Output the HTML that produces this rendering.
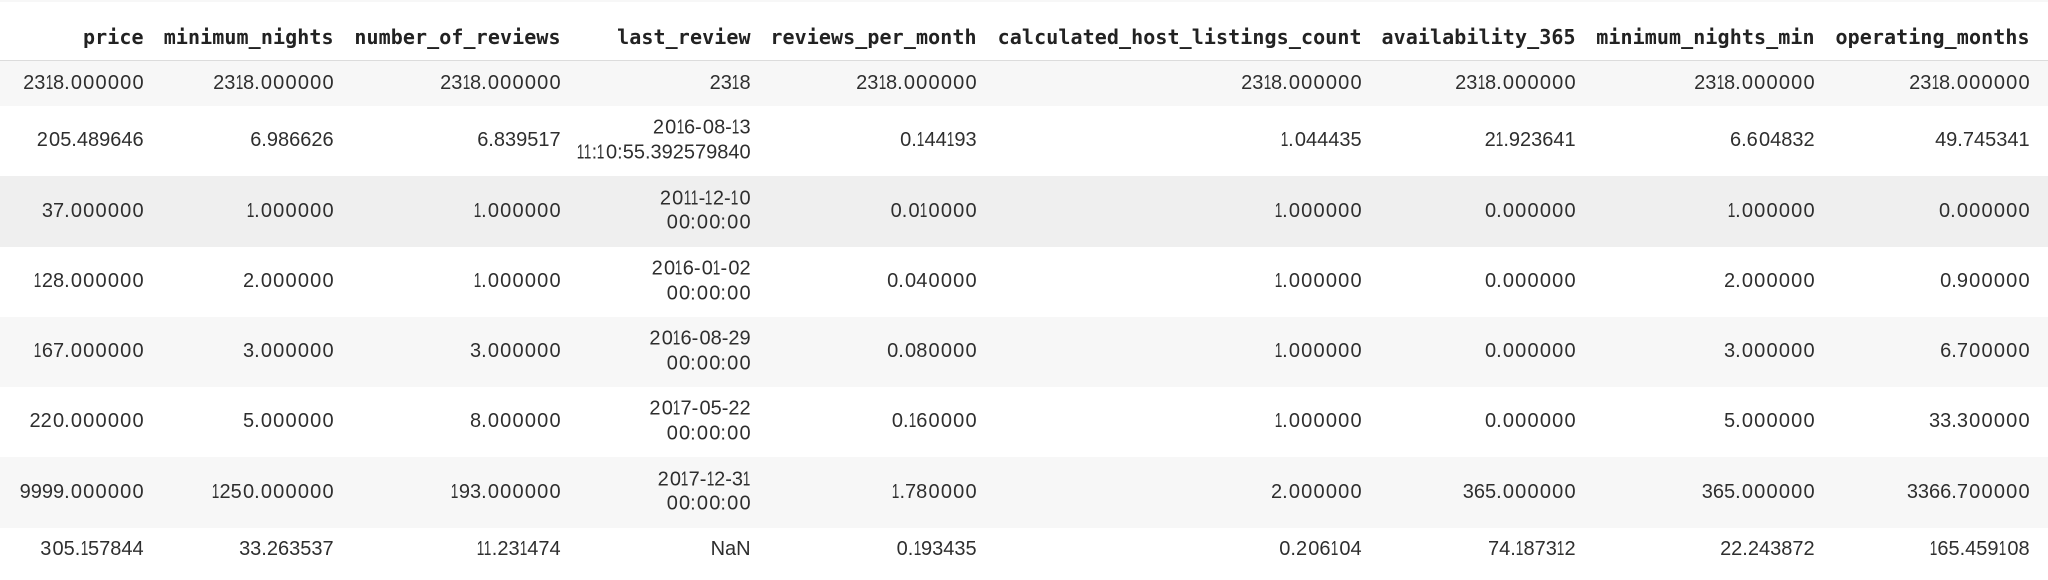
<!DOCTYPE html>
<html><head><meta charset="utf-8">
<style>
html,body{margin:0;padding:0;background:#fff}
#p{position:relative;width:2048px;height:580px;overflow:hidden;background:#fff;font-family:"Liberation Sans",sans-serif;font-size:20px;line-height:24.9px;color:#2e2e2e;filter:blur(.3px)}
.r{position:absolute;left:0;width:2048px}
.r>span{position:absolute;top:50%;transform:translateY(calc(-50% - .5px));text-align:right;white-space:nowrap}
.r>span:nth-child(4){transform:translateY(calc(-50% - .4px))}
i{font-style:normal;display:inline-block;transform:scaleX(.68);margin:0 -1.75px}
u{text-decoration:none;letter-spacing:1.2px;margin-left:1.2px;margin-right:-1.2px}
.h{font-family:"DejaVu Sans Mono","Liberation Mono",monospace;font-weight:bold;font-size:20px;letter-spacing:.09px;color:#222}
.r>span:nth-child(1){right:1904.4px}
.r>span:nth-child(2){right:1714.4px}
.r>span:nth-child(3){right:1487.4px}
.r>span:nth-child(4){right:1297.4px}
.r>span:nth-child(5){right:1071.4px}
.r>span:nth-child(6){right:686.4px}
.r>span:nth-child(7){right:472.4px}
.r>span:nth-child(8){right:233.4px}
.r>span:nth-child(9){right:18.4px}
</style></head><body>
<div id="p">
<div style="position:absolute;left:0;top:0;width:2048px;height:2px;background:#f7f7f7"></div>
<div style="position:absolute;left:0;top:60px;width:2048px;height:1px;background:#dcdcdc"></div>

<div class="r h" style="top:17px;height:41px"><span>price</span><span>minimum_nights</span><span>number_of_reviews</span><span>last_review</span><span>reviews_per_month</span><span>calculated_host_listings_count</span><span>availability_365</span><span>minimum_nights_min</span><span>operating_months</span></div>

<div class="r" style="top:61px;height:45px;background:#f7f7f7"><span>23<i>1</i>8.<u>000000</u></span><span>23<i>1</i>8.<u>000000</u></span><span>23<i>1</i>8.<u>000000</u></span><span>23<i>1</i>8</span><span>23<i>1</i>8.<u>000000</u></span><span>23<i>1</i>8.<u>000000</u></span><span>23<i>1</i>8.<u>000000</u></span><span>23<i>1</i>8.<u>000000</u></span><span>23<i>1</i>8.<u>000000</u></span></div>

<div class="r" style="top:106px;height:70px"><span>2<u>0</u>5.489646</span><span>6.986626</span><span>6.839517</span><span>2<u>0</u><i>1</i>6-<u>0</u>8-<i>1</i>3<br><i>1</i><i>1</i>:<i>1</i><u>0</u>:55.392579840</span><span><u>0</u>.<i>1</i>44<i>1</i>93</span><span><i>1</i>.<u>0</u>44435</span><span>2<i>1</i>.923641</span><span>6.6<u>0</u>4832</span><span>49.745341</span></div>

<div class="r" style="top:176px;height:71px;background:#efefef"><span>37.<u>000000</u></span><span><i>1</i>.<u>000000</u></span><span><i>1</i>.<u>000000</u></span><span>2<u>0</u><i>1</i><i>1</i>-<i>1</i>2-<i>1</i><u>0</u><br><u>00</u>:<u>00</u>:<u>00</u></span><span><u>0</u>.<u>0</u><i>1</i><u>0000</u></span><span><i>1</i>.<u>000000</u></span><span><u>0</u>.<u>000000</u></span><span><i>1</i>.<u>000000</u></span><span><u>0</u>.<u>000000</u></span></div>

<div class="r" style="top:247px;height:70px"><span><i>1</i>28.<u>000000</u></span><span>2.<u>000000</u></span><span><i>1</i>.<u>000000</u></span><span>2<u>0</u><i>1</i>6-<u>0</u><i>1</i>-<u>0</u>2<br><u>00</u>:<u>00</u>:<u>00</u></span><span><u>0</u>.<u>0</u>4<u>0000</u></span><span><i>1</i>.<u>000000</u></span><span><u>0</u>.<u>000000</u></span><span>2.<u>000000</u></span><span><u>0</u>.9<u>00000</u></span></div>

<div class="r" style="top:317px;height:70px;background:#f7f7f7"><span><i>1</i>67.<u>000000</u></span><span>3.<u>000000</u></span><span>3.<u>000000</u></span><span>2<u>0</u><i>1</i>6-<u>0</u>8-29<br><u>00</u>:<u>00</u>:<u>00</u></span><span><u>0</u>.<u>0</u>8<u>0000</u></span><span><i>1</i>.<u>000000</u></span><span><u>0</u>.<u>000000</u></span><span>3.<u>000000</u></span><span>6.7<u>00000</u></span></div>

<div class="r" style="top:387px;height:70px"><span>22<u>0</u>.<u>000000</u></span><span>5.<u>000000</u></span><span>8.<u>000000</u></span><span>2<u>0</u><i>1</i>7-<u>0</u>5-22<br><u>00</u>:<u>00</u>:<u>00</u></span><span><u>0</u>.<i>1</i>6<u>0000</u></span><span><i>1</i>.<u>000000</u></span><span><u>0</u>.<u>000000</u></span><span>5.<u>000000</u></span><span>33.3<u>00000</u></span></div>

<div class="r" style="top:457px;height:71px;background:#f7f7f7"><span>9999.<u>000000</u></span><span><i>1</i>25<u>0</u>.<u>000000</u></span><span><i>1</i>93.<u>000000</u></span><span>2<u>0</u><i>1</i>7-<i>1</i>2-3<i>1</i><br><u>00</u>:<u>00</u>:<u>00</u></span><span><i>1</i>.78<u>0000</u></span><span>2.<u>000000</u></span><span>365.<u>000000</u></span><span>365.<u>000000</u></span><span>3366.7<u>00000</u></span></div>

<div class="r" style="top:528px;height:44px"><span>3<u>0</u>5.<i>1</i>57844</span><span>33.263537</span><span><i>1</i><i>1</i>.23<i>1</i>474</span><span>NaN</span><span><u>0</u>.<i>1</i>93435</span><span><u>0</u>.2<u>0</u>6<i>1</i><u>0</u>4</span><span>74.<i>1</i>873<i>1</i>2</span><span>22.243872</span><span><i>1</i>65.459<i>1</i><u>0</u>8</span></div>
</div>
</body></html>
